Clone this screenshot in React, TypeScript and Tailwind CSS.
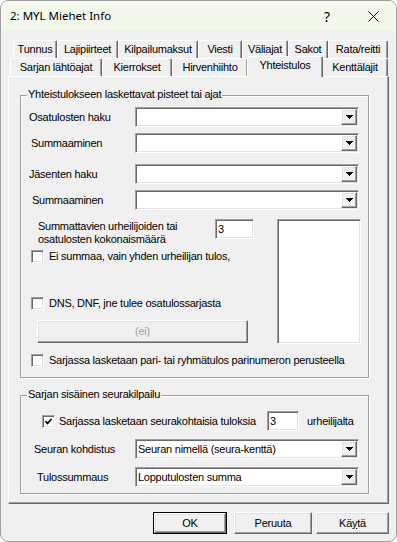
import React from "react";

const sunken =
  "bg-white border border-t-[#a0a0a0] border-l-[#a0a0a0] border-r-white border-b-white shadow-[inset_1px_1px_0_#696969,inset_-1px_-1px_0_#e3e3e3]";
const raised =
  "bg-[#f0f0f0] border border-t-white border-l-white border-r-[#696969] border-b-[#696969] shadow-[inset_-1px_-1px_0_#a0a0a0,inset_1px_1px_0_#e3e3e3]";

function Arrow() {
  return (
    <svg width="7" height="4" viewBox="0 0 7 4" shapeRendering="crispEdges">
      <path d="M0 0h7v1H0z M1 1h5v1H1z M2 2h3v1H2z M3 3h1v1H3z" fill="#000" />
    </svg>
  );
}

function Combo({ value }: { value?: string }) {
  return (
    <div className={`w-[224px] h-[20px] p-[1px] flex ${sunken}`}>
      <div className="flex-1 flex items-center pl-[1px] leading-[13px] whitespace-nowrap">{value}</div>
      <div className={`w-[16px] h-full flex items-center justify-center ${raised}`}>
        <Arrow />
      </div>
    </div>
  );
}

function CheckBox({ checked }: { checked?: boolean }) {
  return (
    <div className={`w-[13px] h-[13px] shrink-0 flex items-center justify-center ${sunken}`}>
      {checked && (
        <svg width="9" height="9" viewBox="0 0 9 9">
          <polyline points="1.5,4.2 3.5,6.4 7.6,2" fill="none" stroke="#000" strokeWidth="1.7" />
        </svg>
      )}
    </div>
  );
}

function CheckRow({ label, className, checked }: { label: string; className: string; checked?: boolean }) {
  return (
    <div className={`flex items-center h-[13px] ${className}`}>
      <CheckBox checked={checked} />
      <span className="ml-[5px] leading-[13px] whitespace-nowrap">{label}</span>
    </div>
  );
}

function Group({ title, className, children }: { title: string; className: string; children?: React.ReactNode }) {
  return (
    <div className={`relative border border-[#a0a0a0] shadow-[1px_1px_0_#fff,inset_1px_1px_0_#fff] ${className}`}>
      <span className="absolute -top-[8px] left-[6px] px-[1px] bg-[#f0f0f0] leading-[13px] whitespace-nowrap">{title}</span>
      {children}
    </div>
  );
}

const row1: [string, string][] = [
  ["Tunnus", "w-[44px]"],
  ["Lajipiirteet", "w-[61px]"],
  ["Kilpailumaksut", "w-[80px]"],
  ["Viesti", "w-[44px]"],
  ["Väliajat", "w-[46px]"],
  ["Sakot", "w-[40px]"],
  ["Rata/reitti", "w-[60px]"],
];

const tabCls =
  "h-[18px] flex items-center justify-center bg-[#f0f0f0] border-t border-l border-r border-t-white border-l-white border-r-[#696969] shadow-[inset_-1px_0_0_#a0a0a0] rounded-t-[2px] whitespace-nowrap";

export default function App() {
  return (
    <div className="w-[397px] h-[542px] bg-white">
      <div className="w-[397px] h-[542px] flex flex-col bg-[#f0f0f0] border border-[#a0a0a0] rounded-[8px] overflow-hidden font-['Liberation_Sans',Arial,sans-serif] text-[11px] tracking-[-0.25px] text-black">
        {/* Title bar */}
        <div className="h-[30px] shrink-0 flex items-center bg-[#f3f7ec] font-['Noto_Sans',sans-serif] tracking-normal">
          <span className="pl-[9px] text-[11.5px]">2: MYL Miehet Info</span>
          <div className="ml-auto flex h-full">
            <div className="w-[46px] flex items-center justify-center text-[14px]">?</div>
            <div className="w-[46px] flex items-center justify-center">
              <svg width="11" height="11" viewBox="0 0 11 11">
                <path d="M0.5 0.5 L10.5 10.5 M10.5 0.5 L0.5 10.5" stroke="#000" strokeWidth="1" />
              </svg>
            </div>
          </div>
        </div>

        {/* Tabs */}
        <div className="mt-[9px] ml-[12px] flex h-[18px]">
          {row1.map(([label, w]) => (
            <div key={label} className={`${tabCls} ${w}`}>
              {label}
            </div>
          ))}
        </div>
        <div className="ml-[9px] flex h-[18px]">
          <div className={`${tabCls} w-[92px]`}>Sarjan lähtöajat</div>
          <div className={`${tabCls} w-[70px]`}>Kierrokset</div>
          <div className={`${tabCls} w-[76px]`}>Hirvenhiihto</div>
          <div className="relative z-10 -mt-[2px] -mx-[1px] w-[76px] h-[21px] pb-[3px] flex items-center justify-center bg-[#f0f0f0] border-t border-l border-r border-t-white border-l-white border-r-[#696969] shadow-[inset_-1px_0_0_#a0a0a0] rounded-t-[2px]">
            Yhteistulos
          </div>
          <div className={`${tabCls} w-[66px]`}>Kenttälajit</div>
        </div>

        {/* Panel */}
        <div className="ml-[7px] w-[381px] h-[428px] shrink-0 flex flex-col border border-t-white border-l-white border-r-[#696969] border-b-[#696969] shadow-[inset_-1px_-1px_0_#a0a0a0]">
          <Group title="Yhteistulokseen laskettavat pisteet tai ajat" className="mt-[18px] ml-[11px] w-[349px] h-[283px] shrink-0">
            <div className="flex items-center h-[20px] mt-[11px]">
              <span className="pl-[8px] w-[114px] whitespace-nowrap">Osatulosten haku</span>
              <Combo />
            </div>
            <div className="flex items-center h-[20px] mt-[6px]">
              <span className="pl-[10px] w-[114px] whitespace-nowrap">Summaaminen</span>
              <Combo />
            </div>
            <div className="flex items-center h-[20px] mt-[11px]">
              <span className="pl-[8px] w-[114px] whitespace-nowrap">Jäsenten haku</span>
              <Combo />
            </div>
            <div className="flex items-center h-[20px] mt-[6px]">
              <span className="pl-[11px] w-[114px] whitespace-nowrap">Summaaminen</span>
              <Combo />
            </div>

            <div className="flex mt-[9px]">
              <div className="w-[256px]">
                <div className="flex">
                  <div className="pl-[17px] w-[194px] pt-[1px] leading-[13px]">
                    Summattavien urheilijoiden tai
                    <br />
                    osatulosten kokonaismäärä
                  </div>
                  <div className={`w-[39px] h-[20px] p-[1px] flex items-center pl-[2px] ${sunken}`}>3</div>
                </div>
                <CheckRow className="mt-[4px] pl-[10px]" label="Ei summaa, vain yhden urheilijan tulos," />
                <CheckRow className="mt-[34px] pl-[10px]" label="DNS, DNF, jne tulee osatulossarjasta" />
                <div className={`mt-[10px] ml-[16px] w-[211px] h-[23px] flex items-center justify-center text-[#a0a0a0] ${raised}`}>
                  (ei)
                </div>
              </div>
              <div className={`w-[84px] h-[125px] ${sunken}`} />
            </div>
            <CheckRow className="mt-[10px] pl-[10px]" label="Sarjassa lasketaan pari- tai ryhmätulos parinumeron perusteella" />
          </Group>

          <Group title="Sarjan sisäinen seurakilpailu" className="mt-[17px] ml-[11px] w-[349px] h-[99px] shrink-0">
            <div className="flex items-center h-[20px] mt-[15px]">
              <div className="w-[246px] pl-[21px] flex items-center">
                <CheckBox checked />
                <span className="ml-[4px] whitespace-nowrap">Sarjassa lasketaan seurakohtaisia tuloksia</span>
              </div>
              <div className={`w-[32px] h-[20px] p-[1px] flex items-center pl-[2px] ${sunken}`}>3</div>
              <span className="ml-[8px] whitespace-nowrap">urheilijalta</span>
            </div>
            <div className="flex items-center h-[20px] mt-[8px]">
              <span className="pl-[13px] w-[114px] whitespace-nowrap">Seuran kohdistus</span>
              <Combo value="Seuran nimellä (seura-kenttä)" />
            </div>
            <div className="flex items-center h-[20px] mt-[8px]">
              <span className="pl-[16px] w-[114px] whitespace-nowrap">Tulossummaus</span>
              <Combo value="Lopputulosten summa" />
            </div>
          </Group>
        </div>

        {/* Buttons */}
        <div className="flex mt-[8px] ml-[152px]">
          <div className="w-[74px] h-[22px] border border-black">
            <div className={`w-full h-full flex items-center justify-center ${raised}`}>OK</div>
          </div>
          <div className={`ml-[7px] w-[78px] h-[22px] flex items-center justify-center ${raised}`}>Peruuta</div>
          <div className={`ml-[4px] w-[73px] h-[22px] flex items-center justify-center ${raised}`}>
            Kä<span className="underline">y</span>tä
          </div>
        </div>
      </div>
    </div>
  );
}
